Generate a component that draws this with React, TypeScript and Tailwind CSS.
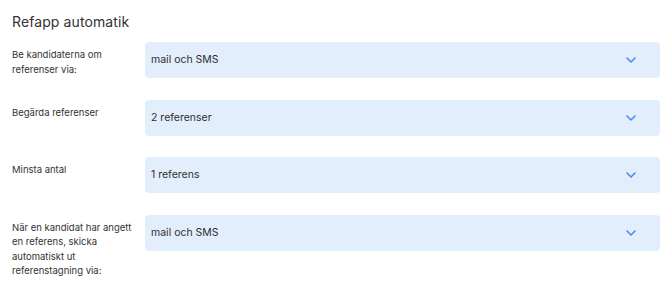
import React from 'react';

const rows = [
  { label: 'Be kandidaterna om referenser via:', value: 'mail och SMS' },
  { label: 'Begärda referenser', value: '2 referenser' },
  { label: 'Minsta antal', value: '1 referens' },
  { label: 'När en kandidat har angett en referens, skicka automatiskt ut referenstagning via:', value: 'mail och SMS' },
];

function Chevron() {
  return (
    <svg width="10" height="6" viewBox="0 0 10 6" fill="none">
      <path d="M1 1l4 4 4-4" stroke="#4a8af4" strokeWidth="1.6" strokeLinecap="round" strokeLinejoin="round" />
    </svg>
  );
}

export default function App() {
  return (
    <div className="w-[670px] h-[286px] bg-white overflow-hidden pl-3 pr-[10px] pt-[12px] text-[#2f2f2f]" style={{ fontFamily: 'Inter, "Noto Sans", sans-serif' }}>
      <h1 className="text-[14px] leading-5 tracking-[0.1px] text-[#333]">Refapp automatik</h1>
      <div className="mt-[10px] flex flex-col gap-[21.5px]">
        {rows.map((r) => (
          <div key={r.value + r.label} className="grid grid-cols-[121px_1fr] gap-3 items-start">
            <p className="pt-[6px] text-[9.5px] leading-[14.5px] text-[#333]">{r.label}</p>
            <div className="h-9 rounded-[4px] bg-[#e3eefd] flex items-center justify-between pl-[6px] pr-[24px]">
              <span className="text-[10.5px]">{r.value}</span>
              <Chevron />
            </div>
          </div>
        ))}
      </div>
    </div>
  );
}
